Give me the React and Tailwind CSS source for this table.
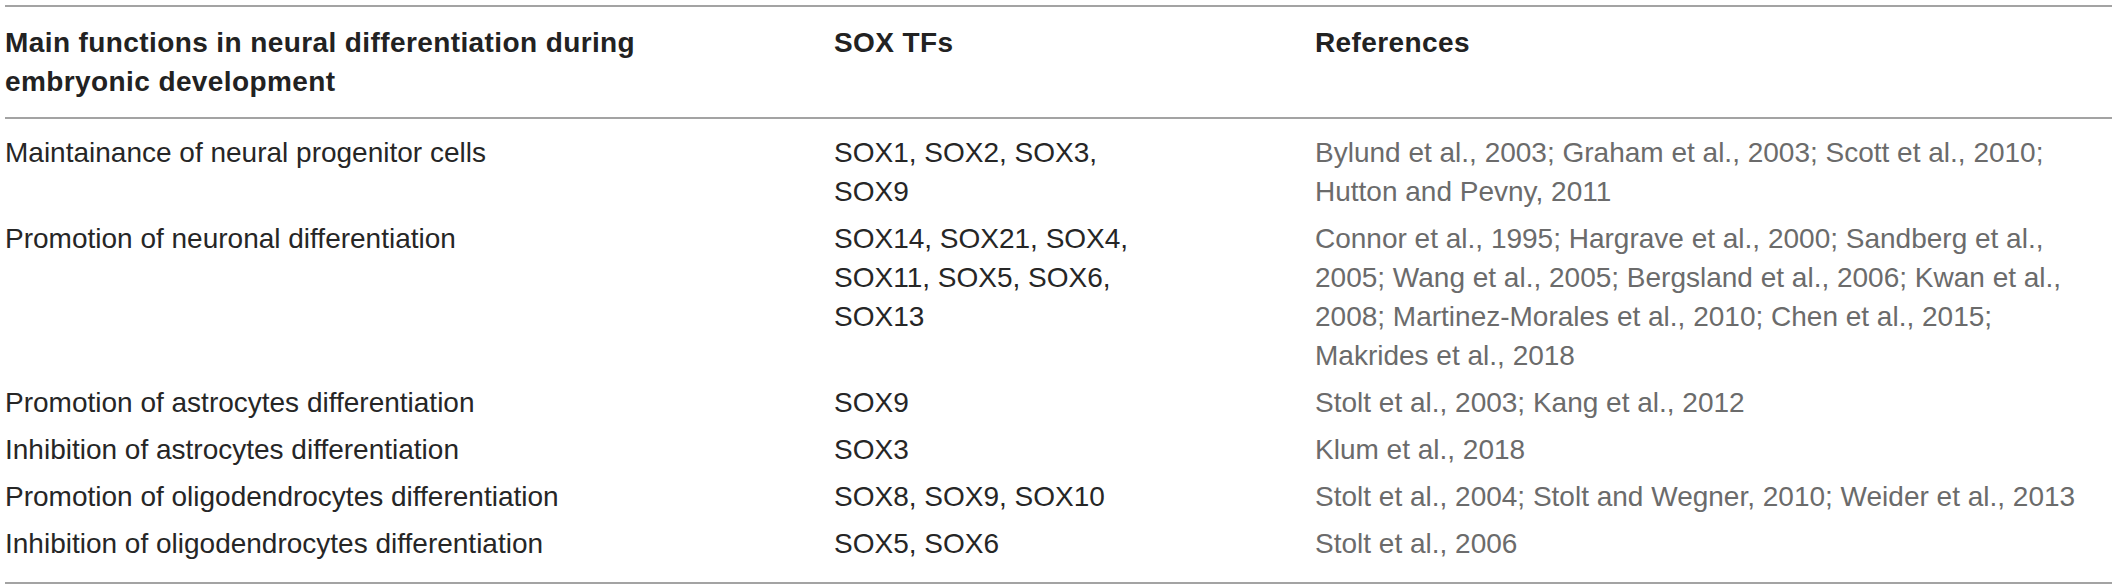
import React from "react";

const rows = [
    {
        fn: ["Maintainance of neural progenitor cells"],
        tfs: ["SOX1, SOX2, SOX3,", "SOX9"],
        refs: ["Bylund et al., 2003; Graham et al., 2003; Scott et al., 2010;", "Hutton and Pevny, 2011"],
    },
    {
        fn: ["Promotion of neuronal differentiation"],
        tfs: ["SOX14, SOX21, SOX4,", "SOX11, SOX5, SOX6,", "SOX13"],
        refs: [
            "Connor et al., 1995; Hargrave et al., 2000; Sandberg et al.,",
            "2005; Wang et al., 2005; Bergsland et al., 2006; Kwan et al.,",
            "2008; Martinez-Morales et al., 2010; Chen et al., 2015;",
            "Makrides et al., 2018",
        ],
    },
    {
        fn: ["Promotion of astrocytes differentiation"],
        tfs: ["SOX9"],
        refs: ["Stolt et al., 2003; Kang et al., 2012"],
    },
    {
        fn: ["Inhibition of astrocytes differentiation"],
        tfs: ["SOX3"],
        refs: ["Klum et al., 2018"],
    },
    {
        fn: ["Promotion of oligodendrocytes differentiation"],
        tfs: ["SOX8, SOX9, SOX10"],
        refs: ["Stolt et al., 2004; Stolt and Wegner, 2010; Weider et al., 2013"],
    },
    {
        fn: ["Inhibition of oligodendrocytes differentiation"],
        tfs: ["SOX5, SOX6"],
        refs: ["Stolt et al., 2006"],
    },
];

// one cell, each entry on its own line like the original table
function Lines({ items }) {
    return (
        <div>
            {items.map((line, i) => (
                <span key={i} className="block whitespace-nowrap">
                    {line}
                </span>
            ))}
        </div>
    );
}

function App() {
    return (
        <div className="min-h-screen bg-white px-[5px] pt-[5px] font-['Liberation_Sans',Arial,sans-serif] text-[28px] leading-[39px]">
            <div className="border-y-2 border-[#a3a3a3]">
                {/* Header */}
                <div className="grid grid-cols-[829px_481px_1fr] border-b-2 border-[#a3a3a3] py-[16px] font-bold tracking-[0.4px] text-[#222]">
                    <Lines items={["Main functions in neural differentiation during", "embryonic development"]} />
                    <div>SOX TFs</div>
                    <div>References</div>
                </div>

                {/* Body rows */}
                <div className="pt-[10px] pb-[15px]">
                    {rows.map((row, i) => (
                        <div key={i} className="grid grid-cols-[829px_481px_1fr] py-[4px]">
                            <div className="text-[#262626]">
                                <Lines items={row.fn} />
                            </div>
                            <div className="text-[#262626]">
                                <Lines items={row.tfs} />
                            </div>
                            <div className="text-[#6b6b6b]">
                                <Lines items={row.refs} />
                            </div>
                        </div>
                    ))}
                </div>
            </div>
        </div>
    );
}

export default App;
